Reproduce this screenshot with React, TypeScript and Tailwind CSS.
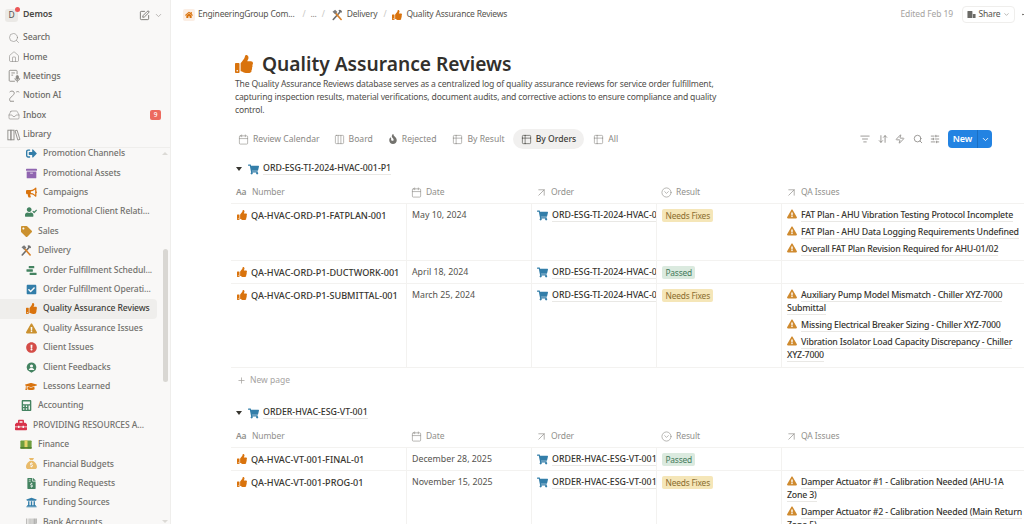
import type { ReactNode } from "react";
import {
  ArrowUpRight,
  Calendar,
  ChevronDown,
  CircleChevronDown,
  Columns3,
  Ellipsis,
  Inbox,
  Plus,
  Search,
  SlidersHorizontal,
  SquarePen,
  Table2,
  Zap,
  ArrowDownUp,
  ListFilter,
  House,
} from "lucide-react";
import {
  FaArchive,
  FaBullhorn,
  FaBarcode,
  FaCalculator,
  FaCheckSquare,
  FaExclamationCircle,
  FaExclamationTriangle,
  FaFileInvoiceDollar,
  FaFire,
  FaGraduationCap,
  FaHome,
  FaShoppingCart,
  FaSignOutAlt,
  FaTag,
  FaThumbsUp,
  FaToolbox,
  FaUniversity,
  FaUserCheck,
} from "react-icons/fa";
import { FaSackDollar } from "react-icons/fa6";

function Tools({ size = 13 }: { size?: number }) {
  return (
    <svg width={size} height={size} viewBox="0 0 16 16" fill="none">
      <path d="M3 14 12 4" stroke="#6e6e6e" strokeWidth="2.2" strokeLinecap="round" />
      <path d="M10 1.5a3 3 0 0 1 4.5 3.5L12.5 4l-1 1z" fill="#6e6e6e" />
      <path d="M13.5 14 6 5.5" stroke="#d9822b" strokeWidth="2.2" strokeLinecap="round" />
      <path d="M2 3.5 5.5 1 8.5 4 5.5 7z" fill="#7b7b7b" />
    </svg>
  );
}

function Money() {
  return (
    <svg width="13" height="13" viewBox="0 0 16 16">
      <rect x="0.5" y="2.5" width="15" height="11" rx="1" fill="#6f9e3f" />
      <rect x="6" y="2.5" width="4" height="11" fill="#e8d36a" />
      <rect x="0.5" y="11.5" width="15" height="2" fill="#4c7d2c" />
    </svg>
  );
}

function Schedule() {
  return (
    <svg width="11" height="11" viewBox="0 0 12 12" fill="#448361">
      <rect x="3" y="1" width="6" height="2.6" rx="0.4" />
      <rect x="0.5" y="4.7" width="7" height="2.6" rx="0.4" />
      <rect x="4" y="8.4" width="7.5" height="2.6" rx="0.4" />
    </svg>
  );
}

function Feedback() {
  return (
    <svg width="11" height="11" viewBox="0 0 12 12">
      <path d="M6 .5a5.2 5.2 0 0 1 2.6 9.7L6 11.8 3.4 10.2A5.2 5.2 0 0 1 6 .5z" fill="#448361" />
      <circle cx="6" cy="4.3" r="1.7" fill="#f9f8f7" />
      <path d="M3 8.6c.4-1.5 1.6-2 3-2s2.6.5 3 2z" fill="#f9f8f7" />
    </svg>
  );
}

function MeetingsIcon() {
  return (
    <svg width="14" height="14" viewBox="0 0 16 16" fill="none" stroke="#8a8884" strokeWidth="1">
      <path d="M9 14H3.5a1 1 0 0 1-1-1V2.5a1 1 0 0 1 1-1h7a1 1 0 0 1 1 1V6" />
      <path d="M5 4.5h4M5 7h2" />
      <rect x="10.5" y="7.5" width="2.6" height="4.4" rx="1.3" fill="#8a8884" />
      <path d="M9 10.5a2.8 2.8 0 0 0 5.6 0M11.8 13.5v1.8" />
    </svg>
  );
}

function AiIcon() {
  return (
    <svg width="14" height="14" viewBox="0 0 16 16" fill="none" stroke="#8a8884" strokeWidth="1">
      <path d="M3 3.5c1.5-1.5 4-1.5 5 0 .8 1.3 0 2.6-1.3 3.8L3.5 10.5c-.8 1-.6 2.5.2 3.5" />
      <path d="M3.5 14h4.5M10.5 3.5c1-.8 2.5-.8 3.5.2" />
    </svg>
  );
}

function LibraryIcon() {
  return (
    <svg width="14" height="14" viewBox="0 0 16 16" fill="none" stroke="#8a8884" strokeWidth="1">
      <rect x="1" y="2.5" width="3.5" height="11" />
      <rect x="4.5" y="2.5" width="3.5" height="11" />
      <path d="M9.2 3.2 11.5 2.5 14.8 13 12.4 13.8z" />
    </svg>
  );
}

type SideRow = { label: string; icon: ReactNode; level: 0 | 1 | 2; active?: boolean };

const sideRows: SideRow[] = [
  { label: "Promotion Channels", level: 2, icon: <FaSignOutAlt size={11} color="#337ea9" /> },
  { label: "Promotional Assets", level: 2, icon: <FaArchive size={11} color="#9065b0" /> },
  { label: "Campaigns", level: 2, icon: <FaBullhorn size={11} color="#d9730d" /> },
  { label: "Promotional Client Relati...", level: 2, icon: <FaUserCheck size={12} color="#448361" /> },
  { label: "Sales", level: 1, icon: <FaTag size={11} color="#cb912f" /> },
  { label: "Delivery", level: 1, icon: <Tools /> },
  { label: "Order Fulfillment Schedul...", level: 2, icon: <Schedule /> },
  { label: "Order Fulfillment Operati...", level: 2, icon: <FaCheckSquare size={11} color="#337ea9" /> },
  { label: "Quality Assurance Reviews", level: 2, active: true, icon: <FaThumbsUp size={11} color="#d9730d" /> },
  { label: "Quality Assurance Issues", level: 2, icon: <FaExclamationTriangle size={11} color="#cb912f" /> },
  { label: "Client Issues", level: 2, icon: <FaExclamationCircle size={11} color="#d44c47" /> },
  { label: "Client Feedbacks", level: 2, icon: <Feedback /> },
  { label: "Lessons Learned", level: 2, icon: <FaGraduationCap size={13} color="#d9730d" /> },
  { label: "Accounting", level: 1, icon: <FaCalculator size={11} color="#448361" /> },
  { label: "PROVIDING RESOURCES A...", level: 0, icon: <FaToolbox size={12} color="#d8324a" /> },
  { label: "Finance", level: 1, icon: <Money /> },
  { label: "Financial Budgets", level: 2, icon: <FaSackDollar size={11} color="#e9bb6b" /> },
  { label: "Funding Requests", level: 2, icon: <FaFileInvoiceDollar size={11} color="#448361" /> },
  { label: "Funding Sources", level: 2, icon: <FaUniversity size={11} color="#337ea9" /> },
  { label: "Bank Accounts", level: 2, icon: <FaBarcode size={11} color="#91918e" /> },
];

const indent = { 0: "pl-[15px]", 1: "pl-[20px]", 2: "pl-[25px]" };

function NavRow({ icon, label, right }: { icon: ReactNode; label: string; right?: ReactNode }) {
  return (
    <div className="flex h-[19.4px] items-center pl-[4px] pr-[29px] font-medium text-[#6b6a66]">
      <span className="flex w-[19px] justify-center">{icon}</span>
      <span className="flex-1">{label}</span>
      {right}
    </div>
  );
}

function Sidebar() {
  return (
    <aside className="flex h-[524px] w-[171px] shrink-0 flex-col border-r border-[#efeeec] bg-[#f9f8f7] text-[8.6px] tracking-[-0.1px]">
      <div className="flex h-[28px] items-center pl-[5px] pr-[7px] pt-[2px]">
        <span className="relative flex h-[13px] w-[13px] items-center justify-center rounded-[3px] bg-[#ebe9e6] text-[8.5px] text-[#55534e]">
          D
          <span className="absolute -right-[2px] -top-[2px] h-[5px] w-[5px] rounded-full bg-[#eb5757]" />
        </span>
        <span className="ml-[5px] flex-1 text-[8.8px] font-semibold text-[#4a4945]">Demos</span>
        <SquarePen size={11} strokeWidth={1.6} color="#55534e" />
        <ChevronDown size={9} color="#a5a39f" className="ml-[4px]" />
      </div>
      <NavRow icon={<Search size={12} strokeWidth={1.2} color="#8a8884" />} label="Search" />
      <NavRow icon={<House size={12} strokeWidth={1.2} color="#8a8884" />} label="Home" />
      <NavRow icon={<MeetingsIcon />} label="Meetings" />
      <NavRow icon={<AiIcon />} label="Notion AI" />
      <NavRow
        icon={<Inbox size={12} strokeWidth={1.2} color="#8a8884" />}
        label="Inbox"
        right={
          <span className="-mr-[20px] flex h-[10px] w-[11px] items-center justify-center rounded-[2px] bg-[#ec6a5e] text-[6.5px] text-white">
            9
          </span>
        }
      />
      <NavRow icon={<LibraryIcon />} label="Library" />
      <div className="relative mt-[2.6px] min-h-0 flex-1 overflow-hidden border-t border-[#efeeec] font-medium text-[#73726e]">
        <div className="-mt-[3.9px]">
          {sideRows.map((r) => (
            <div
              key={r.label}
              className={`flex h-[19.4px] w-[157px] items-center rounded-r-[4px] ${indent[r.level]} ${
                r.active ? "bg-[#efeeec] text-[#3f3e3a]" : ""
              }`}
            >
              <span className="flex w-[12px] justify-center">{r.icon}</span>
              <span className="ml-[6px] whitespace-nowrap">{r.label}</span>
            </div>
          ))}
        </div>
        <span className="absolute right-[2px] top-[101px] h-[133px] w-[5px] rounded-full bg-[#d9d7d3]" />
        <span className="absolute right-[2px] top-[4px] h-0 w-0 border-x-[3px] border-b-[3px] border-x-transparent border-b-[#dcdad6]" />
        <span className="absolute bottom-[1px] right-[2px] h-0 w-0 border-x-[3px] border-t-[3px] border-x-transparent border-t-[#dcdad6]" />
      </div>
    </aside>
  );
}

function Thumb({ size = 11 }: { size?: number }) {
  return <FaThumbsUp size={size} color="#d9730d" className="shrink-0" />;
}

function Cart() {
  return <FaShoppingCart size={11} color="#337ea9" className="shrink-0" />;
}

function Topbar() {
  return (
    <header className="flex h-[29px] items-center pl-[12px] text-[8.5px] tracking-[-0.2px] text-[#55534e]">
      <span className="flex h-[12px] w-[12px] items-center justify-center rounded-[2px] bg-[#fbeee4]">
        <FaHome size={8} color="#d9730d" />
      </span>
      <span className="ml-[3px]">EngineeringGroup Com...</span>
      <span className="ml-[8px] text-[#c8c7c4]">/</span>
      <span className="ml-[5px] text-[#7d7b77]">...</span>
      <span className="ml-[5px] text-[#c8c7c4]">/</span>
      <span className="ml-[6px] flex items-center">
        <Tools size={12} />
      </span>
      <span className="ml-[4px]">Delivery</span>
      <span className="ml-[6px] text-[#c8c7c4]">/</span>
      <span className="ml-[6px]">
        <Thumb size={10} />
      </span>
      <span className="ml-[4px]">Quality Assurance Reviews</span>
      <span className="ml-auto tracking-[-0.1px] text-[#a5a39f]">Edited Feb 19</span>
      <span className="ml-[9px] flex h-[17px] w-[53px] items-center justify-center rounded-[4px] border border-[#efeeec] text-[#55534e]">
        <svg width="9" height="9" viewBox="0 0 10 10" fill="#6b6a66">
          <rect x="0.5" y="1" width="5.5" height="8" rx="0.5" />
          <rect x="6.5" y="4.5" width="3" height="4.5" rx="0.5" />
        </svg>
        <span className="ml-[3px]">Share</span>
        <ChevronDown size={7} className="ml-[3px]" color="#8a8884" />
      </span>
      <Ellipsis size={9} color="#55534e" className="-mr-[6px] ml-[6px] shrink-0" />
    </header>
  );
}

function Tab({ icon, label, active, className }: { icon: ReactNode; label: string; active?: boolean; className?: string }) {
  return (
    <span
      className={`flex h-[20px] items-center whitespace-nowrap rounded-full ${
        active ? "bg-[#f1f0ef] px-[8px] font-medium text-[#3f3e3a]" : "px-[5px] text-[#8a8884]"
      } ${className ?? ""}`}
    >
      {icon}
      <span className="ml-[4px]">{label}</span>
    </span>
  );
}

const tableIcon = <Table2 size={11} strokeWidth={1.3} />;

function Tabs() {
  return (
    <div className="mt-[12px] flex h-[20px] w-[757px] items-center text-[8.6px]">
      <Tab className="-ml-[2px]" icon={<Calendar size={11} strokeWidth={1.3} />} label="Review Calendar" />
      <Tab className="ml-[4px]" icon={<Columns3 size={11} strokeWidth={1.3} />} label="Board" />
      <Tab className="ml-[5px]" icon={<FaFire size={10} color="#73726e" />} label="Rejected" />
      <Tab className="ml-[6px]" icon={tableIcon} label="By Result" />
      <Tab className="ml-[3px]" active icon={tableIcon} label="By Orders" />
      <Tab className="ml-[4px]" icon={tableIcon} label="All" />
      <div className="ml-auto flex items-center gap-[7.5px] text-[#8a8884]">
        <ListFilter size={10} />
        <ArrowDownUp size={10} />
        <Zap size={10} />
        <Search size={10} />
        <SlidersHorizontal size={10} />
      </div>
      <div className="ml-[8px] flex h-[18px] w-[44px] items-center rounded-[4px] bg-[#2383e2] text-[9px] font-semibold text-white">
        <span className="flex-1 text-center">New</span>
        <span className="flex h-full w-[15px] items-center justify-center border-l border-[#1b6fc2]">
          <ChevronDown size={9} strokeWidth={2.4} />
        </span>
      </div>
    </div>
  );
}

function LinkText({ children }: { children: ReactNode }) {
  return <span className="border-b border-[#e9e8e5] font-medium">{children}</span>;
}

function Tag({ kind }: { kind: "fix" | "pass" }) {
  return kind === "fix" ? (
    <span className="inline-block h-[13px] rounded-[2px] bg-[#f5e6b8] px-[3.5px] text-[8.4px] leading-[13px] tracking-[-0.2px] text-[#8a6d2f]">
      Needs Fixes
    </span>
  ) : (
    <span className="inline-block h-[13px] rounded-[2px] bg-[#dbeadf] px-[3.5px] text-[8.4px] leading-[13px] tracking-[-0.2px] text-[#447a5c]">
      Passed
    </span>
  );
}

const gridCols = "grid grid-cols-[175px_125px_125px_125px_248px]";

function HeaderRow() {
  const cell = "flex items-center gap-[4px] pl-[5px] text-[#91908c]";
  const arrow = <ArrowUpRight size={13} strokeWidth={1.3} className="-mx-[1px]" />;
  return (
    <div className={`${gridCols} h-[23px] border-b border-[#f3f2f0] text-[8.5px] tracking-[-0.1px]`}>
      <div className={`${cell} gap-[3px]`}>
        <span className="w-[12px] text-[8.5px] font-semibold text-[#91908c]">Aa</span>
        Number
      </div>
      <div className={cell}>
        <Calendar size={11} strokeWidth={1.4} />
        Date
      </div>
      <div className={cell}>
        {arrow}
        Order
      </div>
      <div className={cell}>
        <CircleChevronDown size={11} strokeWidth={1.4} />
        Result
      </div>
      <div className={cell}>
        {arrow}
        QA Issues
      </div>
    </div>
  );
}

type Row = {
  number: string;
  date: string;
  order: string;
  result: "fix" | "pass";
  issues: string[];
  height: string;
};

function DataRow({ row }: { row: Row }) {
  const cell = "border-l border-[#f3f2f0] pl-[5px] pt-[5px]";
  return (
    <div className={`${gridCols} ${row.height} border-b border-[#f3f2f0] text-[8.8px] leading-[13px] text-[#37352f]`}>
      <div className="flex items-start pl-[6px] pt-[5px] text-[9.1px] font-medium">
        <span className="mt-[1px]">
          <Thumb size={10} />
        </span>
        <span className="ml-[4px] whitespace-nowrap">{row.number}</span>
      </div>
      <div className={`${cell} text-[#55534e]`}>{row.date}</div>
      <div className={`${cell} flex items-start overflow-hidden whitespace-nowrap`}>
        <span className="mt-[1px]">
          <Cart />
        </span>
        <span className="ml-[4px]">
          <LinkText>{row.order}</LinkText>
        </span>
      </div>
      <div className={cell}>
        <Tag kind={row.result} />
      </div>
      <div className={`${cell} flex flex-col gap-[4px] overflow-hidden pr-[6px] tracking-[-0.2px]`}>
        {row.issues.map((i) => (
          <div key={i}>
            <FaExclamationTriangle size={10} color="#cf8a2e" className="mr-[4px] inline-block align-[-1px]" />
            <LinkText>{i}</LinkText>
          </div>
        ))}
      </div>
    </div>
  );
}

const groupOne: Row[] = [
  {
    number: "QA-HVAC-ORD-P1-FATPLAN-001",
    date: "May 10, 2024",
    order: "ORD-ESG-TI-2024-HVAC-001-P1",
    result: "fix",
    height: "h-[57px]",
    issues: [
      "FAT Plan - AHU Vibration Testing Protocol Incomplete",
      "FAT Plan - AHU Data Logging Requirements Undefined",
      "Overall FAT Plan Revision Required for AHU-01/02",
    ],
  },
  {
    number: "QA-HVAC-ORD-P1-DUCTWORK-001",
    date: "April 18, 2024",
    order: "ORD-ESG-TI-2024-HVAC-001-P1",
    result: "pass",
    height: "h-[23px]",
    issues: [],
  },
  {
    number: "QA-HVAC-ORD-P1-SUBMITTAL-001",
    date: "March 25, 2024",
    order: "ORD-ESG-TI-2024-HVAC-001-P1",
    result: "fix",
    height: "h-[84px]",
    issues: [
      "Auxiliary Pump Model Mismatch - Chiller XYZ-7000 Submittal",
      "Missing Electrical Breaker Sizing - Chiller XYZ-7000",
      "Vibration Isolator Load Capacity Discrepancy - Chiller XYZ-7000",
    ],
  },
];

const groupTwo: Row[] = [
  {
    number: "QA-HVAC-VT-001-FINAL-01",
    date: "December 28, 2025",
    order: "ORDER-HVAC-ESG-VT-001",
    result: "pass",
    height: "h-[23px]",
    issues: [],
  },
  {
    number: "QA-HVAC-VT-001-PROG-01",
    date: "November 15, 2025",
    order: "ORDER-HVAC-ESG-VT-001",
    result: "fix",
    height: "h-[84px]",
    issues: [
      "Damper Actuator #1 - Calibration Needed (AHU-1A Zone 3)",
      "Damper Actuator #2 - Calibration Needed (Main Return Zone 5)",
    ],
  },
];

function Group({ title, rows }: { title: string; rows: Row[] }) {
  return (
    <section className="mt-[12px]">
      <div className="flex h-[16px] items-center pl-[5px] text-[8.8px] font-medium text-[#37352f]">
        <span className="h-0 w-0 border-x-[3px] border-t-[4px] border-x-transparent border-t-[#37352f]" />
        <span className="ml-[6px]">
          <Cart />
        </span>
        <span className="ml-[4px]">
          <LinkText>{title}</LinkText>
        </span>
      </div>
      <div className="mt-[4px]">
        <HeaderRow />
        {rows.map((r) => (
          <DataRow key={r.number} row={r} />
        ))}
      </div>
    </section>
  );
}

export default function App() {
  return (
    <div
      className="flex h-[524px] w-[1024px] overflow-hidden bg-white"
      style={{ fontFamily: '"Noto Sans", sans-serif' }}
    >
      <Sidebar />
      <main className="min-w-0 flex-1 overflow-hidden">
        <Topbar />
        <div className="w-[860px] pl-[60px] pt-[23px]">
          <div className="pl-[4px]">
            <h1 className="flex h-[24px] items-center text-[19.2px] font-semibold text-[#32302c]">
              <Thumb size={18} />
              <span className="ml-[9px] whitespace-nowrap">Quality Assurance Reviews</span>
            </h1>
            <p className="mt-[2px] w-[485px] text-[8.6px] leading-[13px] tracking-[-0.18px] text-[#4f4e4a]">
              The Quality Assurance Reviews database serves as a centralized log of quality assurance reviews for service order fulfillment, capturing inspection results, material verifications, document audits, and corrective actions to ensure compliance and quality control.
            </p>
            <Tabs />
          </div>
          <Group title="ORD-ESG-TI-2024-HVAC-001-P1" rows={groupOne} />
          <div className="flex h-[25px] items-center gap-[4px] pl-[6px] text-[8.5px] text-[#a5a39f]">
            <Plus size={9} />
            New page
          </div>
          <Group title="ORDER-HVAC-ESG-VT-001" rows={groupTwo} />
        </div>
      </main>
    </div>
  );
}
